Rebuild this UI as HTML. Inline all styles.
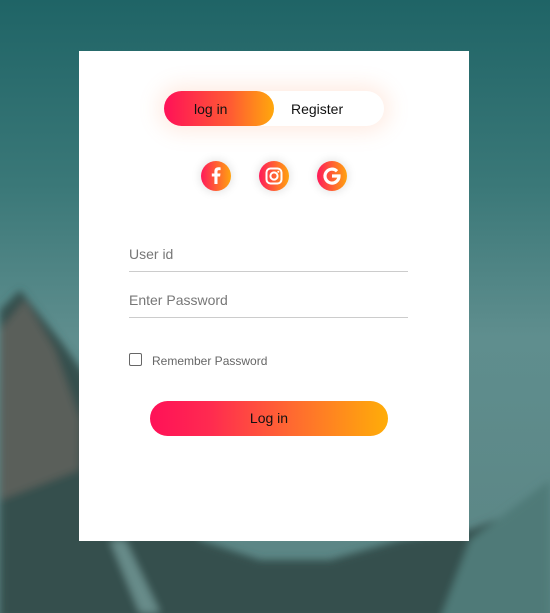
<!DOCTYPE html>
<html><head><style>
*{margin:0;padding:0;box-sizing:border-box}
body{width:550px;height:613px;overflow:hidden;position:relative;font-family:"Liberation Sans",Arial,sans-serif;background:linear-gradient(180deg,#1f6466 0%,#3a7878 30%,#5f8e8e 55%,#5b8483 100%)}
.bg{position:absolute;left:0;top:0}
.card{position:absolute;left:79px;top:51px;width:390px;height:490px;background:#fff}
.toggle{position:absolute;left:85px;top:40px;width:220px;height:35px;border-radius:18px;background:#fff;box-shadow:0 0 20px 6px rgba(255,150,100,.18)}
.act{position:absolute;left:0;top:0;width:110px;height:35px;border-radius:18px;background:linear-gradient(90deg,#ff1158,#ff5a33 60%,#ffa80c)}
.t{position:absolute;top:10px;font-size:14px;color:#111}
.ic{position:absolute;top:110px;width:30px;height:30px;border-radius:50%;background:linear-gradient(90deg,#ff1a5a,#ffa30f);box-shadow:0 0 10px rgba(0,0,0,.15)}
.lab{position:absolute;left:50px;font-size:14px;color:#777}
.line{position:absolute;left:50px;width:279px;height:1px;background:#ccc}
.btn{position:absolute;left:71px;top:350px;width:238px;height:35px;border-radius:18px;background:linear-gradient(90deg,#ff1158,#ff2a50 25%,#ff6a30 60%,#ffad08);text-align:center;line-height:35px;font-size:14px;color:#111}
</style></head><body>
<svg class="bg" width="550" height="613">
<defs><filter id="b"><feGaussianBlur stdDeviation="4"/></filter></defs>
<g filter="url(#b)">
<polygon points="0,310 20,290 60,340 110,410 150,480 200,540 260,560 330,560 400,540 470,530 520,510 550,480 550,620 0,620" fill="#34504d"/>
<polygon points="0,330 25,300 55,350 80,420 79,470 0,500" fill="#6b6560" opacity=".7"/>
<polygon points="470,540 510,510 550,480 550,620 440,620" fill="#4f7a78"/>
<polygon points="110,540 140,613 160,613 125,540" fill="#8ab4b4" opacity=".6"/>
</g>
</svg>
<div class="card">
 <div class="toggle"><div class="act"></div><span class="t" style="left:30px">log in</span><span class="t" style="left:127px">Register</span></div>
 <div class="ic" style="left:122px"><svg width="30" height="30"><path d="M16.5 23V15.5h2.6l.4-3h-3v-1.9c0-.9.3-1.5 1.5-1.5h1.6V6.4c-.3 0-1.2-.1-2.3-.1-2.3 0-3.9 1.4-3.9 4v2.2h-2.6v3h2.6V23z" fill="#fff"/></svg></div>
 <div class="ic" style="left:180px"><svg width="30" height="30"><rect x="7.5" y="7.5" width="15" height="15" rx="4" fill="none" stroke="#fff" stroke-width="2"/><circle cx="15" cy="15" r="3.6" fill="none" stroke="#fff" stroke-width="2"/><circle cx="19.3" cy="10.7" r="1" fill="#fff"/></svg></div>
 <div class="ic" style="left:238px"><svg width="30" height="30"><path d="M20 10.2A7 7 0 1 0 22 15h-7" fill="none" stroke="#fff" stroke-width="3.2"/></svg></div>
 <div class="lab" style="top:195px">User id</div>
 <div class="line" style="top:220px"></div>
 <div class="lab" style="top:241px">Enter Password</div>
 <div class="line" style="top:266px"></div>
 <div style="position:absolute;left:50px;top:302px;width:13px;height:13px;border:1px solid #666;border-radius:2px"></div>
 <div style="position:absolute;left:73px;top:303px;font-size:12px;color:#666">Remember Password</div>
 <div class="btn">Log in</div>
</div>
</body></html>
